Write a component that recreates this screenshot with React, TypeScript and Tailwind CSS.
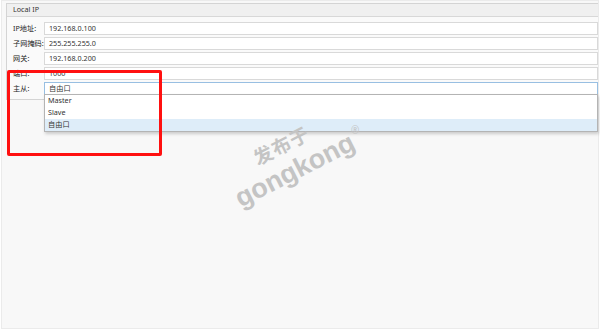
import React from "react";

const font = { fontFamily: '"Noto Sans", "Noto Sans CJK SC", sans-serif' };

interface RowProps {
  label: string;
  value: string;
  active?: boolean;
}

const Row: React.FC<RowProps> = ({ label, value, active }) => (
  <div className="flex items-center h-[13px]">
    <div className="w-[37px] pl-[6px] text-[7.2px] text-[#222] leading-none whitespace-nowrap">{label}</div>
    <div
      className={
        "flex-1 h-[13px] flex items-center pl-[4px] text-[7.2px] leading-none text-[#333] bg-white border " +
        (active ? "border-[#98bfe2]" : "border-[#d9d9d9]")
      }
    >
      {value}
    </div>
  </div>
);

const options = ["Master", "Slave", "自由口"];

export default function App() {
  return (
    <div className="w-[600px] h-[330px] bg-white overflow-hidden" style={font}>
      <div className="relative mx-[1px] h-[329px] border border-[#ebebeb] bg-[#f8f8f8] pl-[4px] pt-[2px]">
        {/* Local IP panel */}
        <div className="h-[97px] border-l border-t border-b border-[#d4d4d4] bg-[#fafafa]">
          <div className="h-[13px] flex items-center px-[6px] bg-[#f0f0f0] border-b border-[#d8d8d8] text-[7.2px] leading-none text-[#333]">
            Local IP
          </div>
          <div className="flex flex-col gap-[2px] pt-[5px]">
            <Row label="IP地址:" value="192.168.0.100" />
            <Row label="子网掩码:" value="255.255.255.0" />
            <Row label="网关:" value="192.168.0.200" />
            <Row label="端口:" value="1000" />
            <div className="relative">
              <Row label="主从:" value="自由口" active />
              {/* open dropdown list */}
              <div className="absolute left-[37px] right-0 top-[12px] bg-white border border-[#b4b4b4] shadow-[1px_2px_3px_rgba(0,0,0,0.18)]">
                {options.map((o, i) => (
                  <div
                    key={o}
                    className={
                      "h-[12px] flex items-center pl-[3px] text-[7.2px] leading-none text-[#333] " +
                      (i === 2 ? "bg-[#deedf9]" : "")
                    }
                  >
                    {o}
                  </div>
                ))}
              </div>
            </div>
          </div>
        </div>

        {/* red annotation box */}
        <div className="absolute left-[5px] top-[69px] w-[155px] h-[86px] border-[3px] border-[#ff1010] rounded-[2px]" />

        {/* watermark */}
        <div
          className="absolute left-[248px] top-[134px] w-[62px] text-center -rotate-[27deg] pointer-events-none select-none text-[#c4c4c4] font-bold text-[19px] leading-none tracking-[1px]"
          style={{ fontFamily: '"Noto Sans CJK SC", sans-serif' }}
        >
          发布于
        </div>
        <div className="absolute left-[228px] top-[156px] -rotate-[27deg] pointer-events-none select-none text-[#c4c4c4] font-bold">
          <span className="text-[27px] leading-none" style={{ fontFamily: '"Liberation Sans", Arial, sans-serif' }}>
            gongkong
          </span>
        </div>
        <div className="absolute left-[349px] top-[124px] text-[10px] leading-none text-[#c4c4c4] pointer-events-none select-none">
          ®
        </div>
      </div>
    </div>
  );
}
